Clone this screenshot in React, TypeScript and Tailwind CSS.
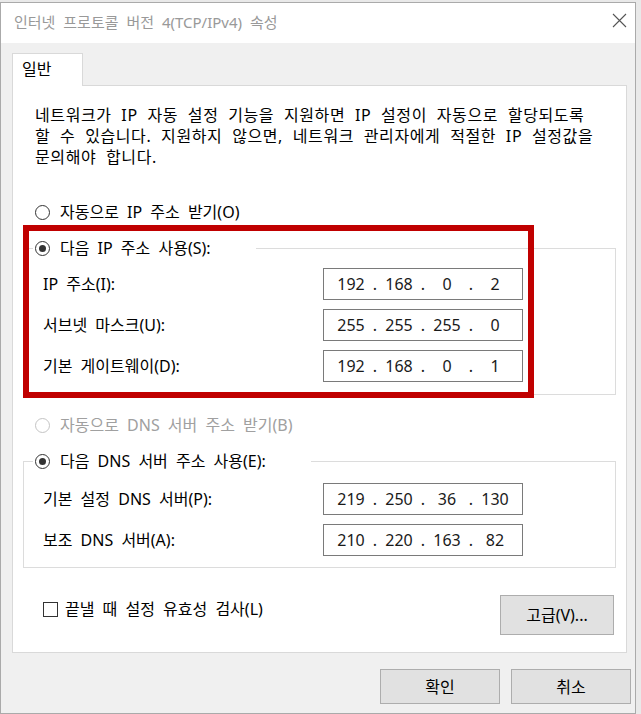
import React from 'react';

const Radio: React.FC<{ checked?: boolean; disabled?: boolean; label: string }> = ({ checked, disabled, label }) => (
  <div className={`flex items-center h-[20px] ${disabled ? 'text-[#a0a0a0]' : 'text-black'}`}>
    <span
      className={`w-[15px] h-[15px] rounded-full border bg-white flex items-center justify-center mr-[10px] ${
        disabled ? 'border-[#c4c4c4]' : 'border-[#333333]'
      }`}
    >
      {checked && <span className="w-[7px] h-[7px] rounded-full bg-[#333333]" />}
    </span>
    <span>{label}</span>
  </div>
);

const IpBox: React.FC<{ parts: string[] }> = ({ parts }) => (
  <div className="w-[200px] h-[32px] border border-[#7a7a7a] bg-white flex items-center pl-[9px] text-[#1a1a1a]">
    {parts.map((p, i) => (
      <React.Fragment key={i}>
        {i > 0 && <span className="w-[12px] text-center">.</span>}
        <span className="w-[36px] text-center">{p}</span>
      </React.Fragment>
    ))}
  </div>
);

const FieldRow: React.FC<{ label: string; parts: string[] }> = ({ label, parts }) => (
  <div className="flex items-center pl-[19px]">
    <span className="w-[280px]">{label}</span>
    <IpBox parts={parts} />
  </div>
);

const GroupBox: React.FC<{ legend: React.ReactNode; first: string; children: React.ReactNode; className?: string }> = ({
  legend,
  first,
  children,
  className,
}) => (
  <div className={`mx-[10px] border border-[#dcdcdc] ${className ?? ''}`}>
    <div className="-mt-[11px] ml-[9px] pl-[2px] pr-[45px] bg-white w-fit">{legend}</div>
    <div className={`flex flex-col gap-[9px] ${first}`}>{children}</div>
  </div>
);

const Button: React.FC<{ label: string; className?: string }> = ({ label, className }) => (
  <div className={`bg-[#e1e1e1] border border-[#adadad] flex items-center justify-center text-black ${className ?? ''}`}>
    {label}
  </div>
);

export default function App() {
  return (
    <div className="w-[641px] h-[714px] bg-[#e9e9e9] pt-[2px] overflow-hidden font-['Noto_Sans','Noto_Sans_CJK_KR',sans-serif] text-[16px] [word-spacing:4px]">
      <div className="w-[636px] h-[712px] border border-[#aaaaaa] bg-[#f0f0f0] flex flex-col">
        {/* title bar */}
        <div className="h-[40px] bg-white flex items-center justify-between pl-[13px] pr-[8px] pb-[2px]">
          <span className="text-[15px] text-[#999999]">인터넷 프로토콜 버전 4(TCP/IPv4) 속성</span>
          <svg width="15" height="15" viewBox="0 0 15 15" className="mb-[4px]">
            <path d="M1 1 L14 14 M14 1 L1 14" stroke="#555555" strokeWidth="1.1" fill="none" />
          </svg>
        </div>

        <div className="flex-1 pt-[10px] pl-[11px]">
          {/* tab */}
          <div className="relative z-10 w-[71px] h-[33px] -mb-px bg-white border-t border-l border-r border-[#d9d9d9] pl-[9px] pt-[3px] text-black">
            일반
          </div>

          {/* panel */}
          <div className="relative w-[615px] h-[568px] bg-white border border-[#d9d9d9] text-black">
            <p className="mt-[19px] pl-[22px] leading-[21px] tracking-[0.6px] [word-spacing:5px]">
              네트워크가 IP 자동 설정 기능을 지원하면 IP 설정이 자동으로 할당되도록
              <br />
              할 수 있습니다. 지원하지 않으면, 네트워크 관리자에게 적절한 IP 설정값을
              <br />
              문의해야 합니다.
            </p>

            <div className="mt-[34px] pl-[22px]">
              <Radio label="자동으로 IP 주소 받기(O)" />
            </div>

            <GroupBox className="mt-[26px] pb-[12px]" first="mt-[10px]" legend={<Radio checked label="다음 IP 주소 사용(S):" />}>
              <FieldRow label="IP 주소(I):" parts={['192', '168', '0', '2']} />
              <FieldRow label="서브넷 마스크(U):" parts={['255', '255', '255', '0']} />
              <FieldRow label="기본 게이트웨이(D):" parts={['192', '168', '0', '1']} />
            </GroupBox>

            <div className="mt-[20px] pl-[22px]">
              <Radio disabled label="자동으로 DNS 서버 주소 받기(B)" />
            </div>

            <GroupBox className="mt-[26px] pb-[11px]" first="mt-[12px]" legend={<Radio checked label="다음 DNS 서버 주소 사용(E):" />}>
              <FieldRow label="기본 설정 DNS 서버(P):" parts={['219', '250', '36', '130']} />
              <FieldRow label="보조 DNS 서버(A):" parts={['210', '220', '163', '82']} />
            </GroupBox>

            <div className="mt-[27px] flex items-start justify-between pl-[30px] pr-[12px]">
              <div className="mt-[4px] h-[20px] flex items-center">
                <span className="w-[15px] h-[15px] border border-[#333333] bg-white mr-[7px]" />
                <span>끝낼 때 설정 유효성 검사(L)</span>
              </div>
              <Button label="고급(V)..." className="w-[114px] h-[40px] [word-spacing:0px]" />
            </div>

            {/* red highlight */}
            <div className="absolute left-[10px] top-[139px] w-[511px] h-[173px] border-[6px] border-[#c00000] pointer-events-none" />
          </div>

          <div className="mt-[16px] flex justify-end gap-[11px] pr-[4px]">
            <Button label="확인" className="w-[120px] h-[35px]" />
            <Button label="취소" className="w-[120px] h-[35px]" />
          </div>
        </div>
      </div>
    </div>
  );
}
